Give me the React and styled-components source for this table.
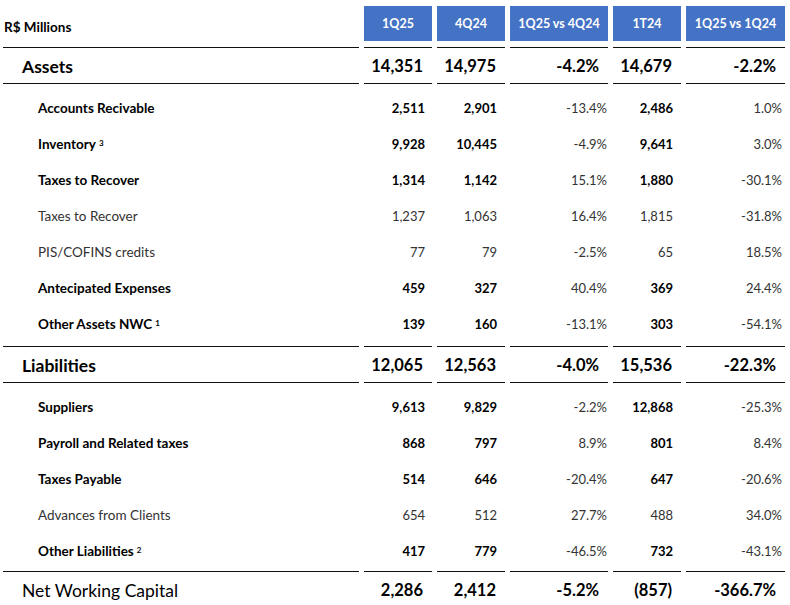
import React from "react";
import styled, { createGlobalStyle } from "styled-components";

const GlobalStyle = createGlobalStyle`
  body {
    margin: 0;
    background: #fff;
    font-family: "Lato", "Liberation Sans", sans-serif;
    color: #000;
  }
`;

const COLS = "356px 68px 68px 98px 68px 99px";

const Table = styled.div`
  width: 790px;
  padding: 6px 0 0 3px;
  box-sizing: border-box;
`;

const Row = styled.div`
  display: grid;
  grid-template-columns: ${COLS};
  column-gap: 5px;
`;

const HeadCell = styled.div`
  padding-bottom: 6px;
  border-bottom: 1px solid #111;
  display: flex;
  align-items: flex-end;
`;

const Unit = styled.span`
  font-size: 13.5px;
  font-weight: 700;
  padding: 0 0 6px 1px;
`;

const HeadBox = styled.div`
  flex: 1;
  height: 35px;
  background: #4472c4;
  color: #fff;
  font-size: 12.5px;
  font-weight: 700;
  display: flex;
  align-items: center;
  justify-content: center;
`;

const BigCell = styled.div`
  border-bottom: 1px solid #111;
  border-top: ${(p) => (p.$top ? "1px solid #111" : "none")};
  display: flex;
  align-items: center;
  justify-content: ${(p) => (p.$label ? "flex-start" : "flex-end")};
  padding: ${(p) => (p.$label ? "1px 0 0 19px" : "1px 9px 0 0")};
  box-sizing: border-box;
  height: ${(p) => (p.$top ? "37px" : "36px")};
  font-size: ${(p) => (p.$label ? "17.5px" : "16.5px")};
  font-weight: ${(p) => (p.$light ? 400 : 700)};
`;

const Group = styled.div`
  padding: 5px 0 ${(p) => p.$bottom}px;
`;

const Cell = styled.div`
  height: 36px;
  display: flex;
  align-items: center;
  justify-content: ${(p) => (p.$label ? "flex-start" : "flex-end")};
  padding: ${(p) => (p.$label ? "2px 0 0 35px" : `2px ${p.$pad}px 0 0`)};
  box-sizing: border-box;
  font-size: ${(p) => (p.$label ? "13.5px" : "13px")};
  font-weight: ${(p) => (p.$bold ? 700 : 400)};
  color: ${(p) => (p.$bold ? "#000" : "#333")};
`;

const Sup = styled.sup`
  font-size: 8px;
  margin-left: 3px;
  position: relative;
  top: -1px;
`;

const HEADERS = ["1Q25", "4Q24", "1Q25 vs 4Q24", "1T24", "1Q25 vs 1Q24"];
const PADS = [7, 8, 1, 8, 3];

const assets = [
  { label: "Accounts Recivable", bold: true, v: ["2,511", "2,901", "-13.4%", "2,486", "1.0%"] },
  { label: "Inventory", sup: "3", bold: true, v: ["9,928", "10,445", "-4.9%", "9,641", "3.0%"] },
  { label: "Taxes to Recover", bold: true, v: ["1,314", "1,142", "15.1%", "1,880", "-30.1%"] },
  { label: "Taxes to Recover", bold: false, v: ["1,237", "1,063", "16.4%", "1,815", "-31.8%"] },
  { label: "PIS/COFINS credits", bold: false, v: ["77", "79", "-2.5%", "65", "18.5%"] },
  { label: "Antecipated Expenses", bold: true, v: ["459", "327", "40.4%", "369", "24.4%"] },
  { label: "Other Assets NWC", sup: "1", bold: true, v: ["139", "160", "-13.1%", "303", "-54.1%"] },
];

const liabilities = [
  { label: "Suppliers", bold: true, v: ["9,613", "9,829", "-2.2%", "12,868", "-25.3%"] },
  { label: "Payroll and Related taxes", bold: true, v: ["868", "797", "8.9%", "801", "8.4%"] },
  { label: "Taxes Payable", bold: true, v: ["514", "646", "-20.4%", "647", "-20.6%"] },
  { label: "Advances from Clients", bold: false, v: ["654", "512", "27.7%", "488", "34.0%"] },
  { label: "Other Liabilities", sup: "2", bold: true, v: ["417", "779", "-46.5%", "732", "-43.1%"] },
];

// percent columns stay regular weight even on bold lines
const isPct = (i) => i === 2 || i === 4;

const SubRows = ({ rows, bottom }) => (
  <Group $bottom={bottom}>
    {rows.map((r, k) => (
      <Row key={k}>
        <Cell $label $bold={r.bold}>
          {r.label}
          {r.sup && <Sup>{r.sup}</Sup>}
        </Cell>
        {r.v.map((val, i) => (
          <Cell key={i} $pad={PADS[i]} $bold={r.bold && !isPct(i)}>
            {val}
          </Cell>
        ))}
      </Row>
    ))}
  </Group>
);

const BigRow = ({ label, values, top, light }) => (
  <Row>
    <BigCell $label $top={top} $light={light}>
      {label}
    </BigCell>
    {values.map((v, i) => (
      <BigCell key={i} $top={top}>
        {v}
      </BigCell>
    ))}
  </Row>
);

export default function App() {
  return (
    <>
      <GlobalStyle />
      <Table>
        <Row>
          <HeadCell>
            <Unit>R$ Millions</Unit>
          </HeadCell>
          {HEADERS.map((h) => (
            <HeadCell key={h}>
              <HeadBox>{h}</HeadBox>
            </HeadCell>
          ))}
        </Row>
        <BigRow label="Assets" values={["14,351", "14,975", "-4.2%", "14,679", "-2.2%"]} />
        <SubRows rows={assets} bottom={5} />
        <BigRow top label="Liabilities" values={["12,065", "12,563", "-4.0%", "15,536", "-22.3%"]} />
        <SubRows rows={liabilities} bottom={3} />
        <BigRow top light label="Net Working Capital" values={["2,286", "2,412", "-5.2%", "(857)", "-366.7%"]} />
      </Table>
    </>
  );
}
